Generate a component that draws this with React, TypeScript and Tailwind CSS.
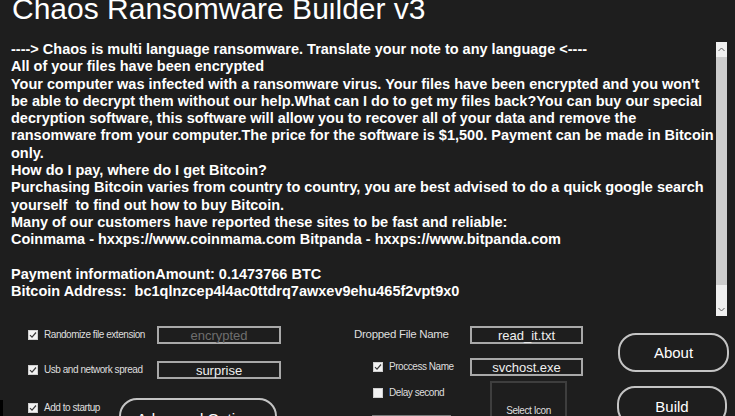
import React from "react";

const lines: string[] = [
  "----> Chaos is multi language ransomware. Translate your note to any language <----",
  "All of your files have been encrypted",
  "Your computer was infected with a ransomware virus. Your files have been encrypted and you won't",
  "be able to decrypt them without our help.What can I do to get my files back?You can buy our special",
  "decryption software, this software will allow you to recover all of your data and remove the",
  "ransomware from your computer.The price for the software is $1,500. Payment can be made in Bitcoin",
  "only.",
  "How do I pay, where do I get Bitcoin?",
  "Purchasing Bitcoin varies from country to country, you are best advised to do a quick google search",
  "yourself  to find out how to buy Bitcoin.",
  "Many of our customers have reported these sites to be fast and reliable:",
  "Coinmama - hxxps://www.coinmama.com Bitpanda - hxxps://www.bitpanda.com",
  "\u00a0",
  "Payment informationAmount: 0.1473766 BTC",
  "Bitcoin Address:  bc1qlnzcep4l4ac0ttdrq7awxev9ehu465f2vpt9x0",
];

function Check({ checked }: { checked: boolean }) {
  return (
    <div className="w-[10px] h-[10px] bg-[#f2f2f2] border border-[#cfcfcf] flex items-center justify-center shrink-0">
      {checked && (
        <svg width="8" height="8" viewBox="0 0 8 8">
          <path d="M1 4.2 L3 6.2 L7 1.5" fill="none" stroke="#3a3a3a" strokeWidth="1.2" />
        </svg>
      )}
    </div>
  );
}

function Label({ children }: { children: React.ReactNode }) {
  return (
    <span className="text-[10px] tracking-[-0.45px] text-[#dedede] whitespace-nowrap leading-none">
      {children}
    </span>
  );
}

function Box({ text, w, dim }: { text: string; w: string; dim?: boolean }) {
  return (
    <div
      className={`${w} h-[18px] border-2 border-[#a9a9a9] flex items-center justify-center text-[13px] leading-none ${
        dim ? "text-[#6e6e6e]" : "text-[#f0f0f0]"
      }`}
    >
      {text}
    </div>
  );
}

export default function App() {
  return (
    <div
      className="w-[735px] h-[416px] overflow-hidden bg-[#1e1e1e] text-white relative"
      style={{ fontFamily: '"Liberation Sans", Arial, sans-serif' }}
    >
      <div className="absolute left-0 top-[400px] w-[3px] h-[16px] bg-black" />
      {/* Title */}
      <div className="pl-[12px] h-[41px] flex flex-col">
        <div className="mt-[-6px] text-[30px] leading-[30px] whitespace-nowrap">
          Chaos Ransomware Builder v3
        </div>
      </div>

      {/* Text area */}
      <div className="flex h-[279px]">
        <div className="pl-[11px] w-[716px] text-[14.5px] font-bold leading-[17.28px] text-white">
          {lines.map((l, i) => (
            <div key={i} className="whitespace-pre">
              {l}
            </div>
          ))}
        </div>
        <div className="mt-[1px] w-[11px] h-[274px] flex flex-col bg-[#f0f0f0]">
          <div className="h-[15px] flex items-center justify-center">
            <svg width="7" height="5" viewBox="0 0 7 5">
              <path d="M0.5 4 L3.5 1 L6.5 4" fill="none" stroke="#606060" strokeWidth="1" />
            </svg>
          </div>
          <div className="h-[228px] bg-[#cdcdcd]" />
          <div className="flex-1" />
          <div className="h-[14px] flex items-center justify-center">
            <svg width="7" height="5" viewBox="0 0 7 5">
              <path d="M0.5 1 L3.5 4 L6.5 1" fill="none" stroke="#606060" strokeWidth="1" />
            </svg>
          </div>
        </div>
      </div>

      {/* Bottom controls */}
      <div className="flex pl-[28px]">
        {/* Column 1 */}
        <div className="w-[253px] flex flex-col pt-[6px]">
          <div className="flex items-center h-[18px]">
            <div className="w-[129px] flex items-center gap-[6px]">
              <Check checked />
              <Label>Randomize file extension</Label>
            </div>
            <Box text="encrypted" w="w-[124px]" dim />
          </div>
          <div className="flex items-center h-[18px] mt-[17px]">
            <div className="w-[129px] flex items-center gap-[6px]">
              <Check checked />
              <Label>Usb and network spread</Label>
            </div>
            <Box text="surprise" w="w-[124px]" />
          </div>
          <div className="flex mt-[19px]">
            <div className="w-[91px] flex items-center gap-[6px] h-[16px] mt-[2px]">
              <Check checked />
              <Label>Add to startup</Label>
            </div>
            <div className="w-[158px] h-[40px] border-2 border-[#c4c4c4] rounded-[18px] flex items-start justify-center pt-[11px] text-[15px] leading-none">
              Advanced Options
            </div>
          </div>
        </div>

        {/* Column 2 */}
        <div className="ml-[73px] w-[229px] flex flex-col pt-[6px]">
          <div className="flex items-center justify-between h-[18px]">
            <span className="text-[11.5px] tracking-[-0.3px] text-[#dedede] whitespace-nowrap leading-none">
              Dropped File Name
            </span>
            <Box text="read_it.txt" w="w-[113px]" />
          </div>
          <div className="flex items-center justify-between h-[18px] mt-[14px] pl-[19px]">
            <div className="flex items-center gap-[6px]">
              <Check checked />
              <Label>Proccess Name</Label>
            </div>
            <Box text="svchost.exe" w="w-[113px]" />
          </div>
          <div className="flex mt-[5px]">
            <div className="pl-[19px] w-[136px] flex flex-col">
              <div className="flex items-center gap-[6px] h-[10px] mt-[7px]">
                <Check checked={false} />
                <Label>Delay second</Label>
              </div>
              <div className="mt-[17px] ml-[-1px] w-[79px] h-[20px] bg-white border border-[#7a7a7a]" />
            </div>
            <div className="w-[77px] h-[50px] border-2 border-[#3e3e3e] flex items-start justify-center pt-[23px]">
              <Label>Select Icon</Label>
            </div>
          </div>
        </div>

        {/* Column 3 */}
        <div className="ml-[34px] w-[112px] flex flex-col pt-[13px]">
          <div className="ml-[1px] w-[111px] h-[39px] border-2 border-[#c4c4c4] rounded-[18px] flex items-center justify-center text-[15px] leading-none">
            About
          </div>
          <div className="mt-[14px] w-[110px] h-[40px] border-2 border-[#c4c4c4] rounded-[18px] flex items-center justify-center text-[15px] leading-none">
            Build
          </div>
        </div>
      </div>
    </div>
  );
}
